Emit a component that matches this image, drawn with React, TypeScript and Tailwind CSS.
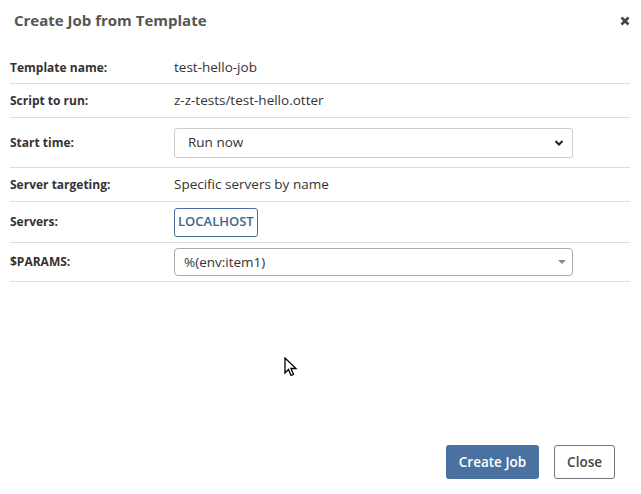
import React from "react";

function Row({ label, h, children }: { label: string; h: string; children: React.ReactNode }) {
  return (
    <div className={`flex items-center border-b border-[#dddddd] ${h}`}>
      <div className="w-[164px] shrink-0 text-[12px] font-bold text-[#333]">{label}</div>
      <div className="flex-1 text-[13.5px] text-[#333]">{children}</div>
    </div>
  );
}

export default function App() {
  return (
    <div className="relative w-[641px] h-[494px] bg-white" style={{ fontFamily: '"Open Sans", "Noto Sans", sans-serif' }}>
      <div className="flex items-center justify-between pl-[14px] pr-[11px] pt-[1px] h-[40px]">
        <div className="text-[15px] font-bold text-[#555]">Create Job from Template</div>
        <svg width="10" height="10" viewBox="0 0 10 10">
          <path d="M1.5 1.5 L8.5 8.5 M8.5 1.5 L1.5 8.5" stroke="#444" strokeWidth="2.6" strokeLinecap="butt" />
        </svg>
      </div>
      <div className="mx-[10px] w-[620px] mt-[12px]">
        <Row label="Template name:" h="h-[32px]">test-hello-job</Row>
        <Row label="Script to run:" h="h-[34px]">z-z-tests/test-hello.otter</Row>
        <Row label="Start time:" h="h-[50px]">
          <div className="flex items-center justify-between w-[399px] h-[30px] border border-[#ccc] rounded-[3px] pl-[13px] pr-[8px]">
            <span>Run now</span>
            <svg width="10" height="8" viewBox="0 0 10 8">
              <path d="M1.5 2 L5 5.5 L8.5 2" stroke="#222" strokeWidth="2" fill="none" />
            </svg>
          </div>
        </Row>
        <Row label="Server targeting:" h="h-[34px]">Specific servers by name</Row>
        <Row label="Servers:" h="h-[41px]">
          <span className="inline-flex items-center h-[29px] px-[3px] border border-[#4a6f9a] rounded-[3px] text-[#3d6793] text-[13px] font-semibold">LOCALHOST</span>
        </Row>
        <Row label="$PARAMS:" h="h-[39px]">
          <div className="flex items-center justify-between w-[399px] h-[28px] border border-[#aaa] rounded-[4px] pl-[9px] pr-[5px]">
            <span>%(env:item1)</span>
            <svg width="10" height="6" viewBox="0 0 10 6">
              <path d="M1 1 L9 1 L5 5 Z" fill="#888" />
            </svg>
          </div>
        </Row>
      </div>
      <div className="absolute left-[284px] top-[357px]">
        <svg width="14" height="22" viewBox="0 0 14 22">
          <path d="M1 1 L1 16 L4.5 12.5 L7 18.5 L9.5 17.5 L7 11.5 L12 11.5 Z" fill="#fff" stroke="#000" strokeWidth="1.3" />
        </svg>
      </div>
      <div className="absolute right-[26px] bottom-[15px] flex gap-[15px]">
        <button className="h-[34px] px-[13px] rounded-[3px] bg-[#4a72a0] text-white text-[13.5px] font-semibold">Create Job</button>
        <button className="h-[34px] px-[12px] rounded-[3px] border border-[#6c757d] bg-white text-[#444] text-[13.5px] font-semibold">Close</button>
      </div>
    </div>
  );
}
